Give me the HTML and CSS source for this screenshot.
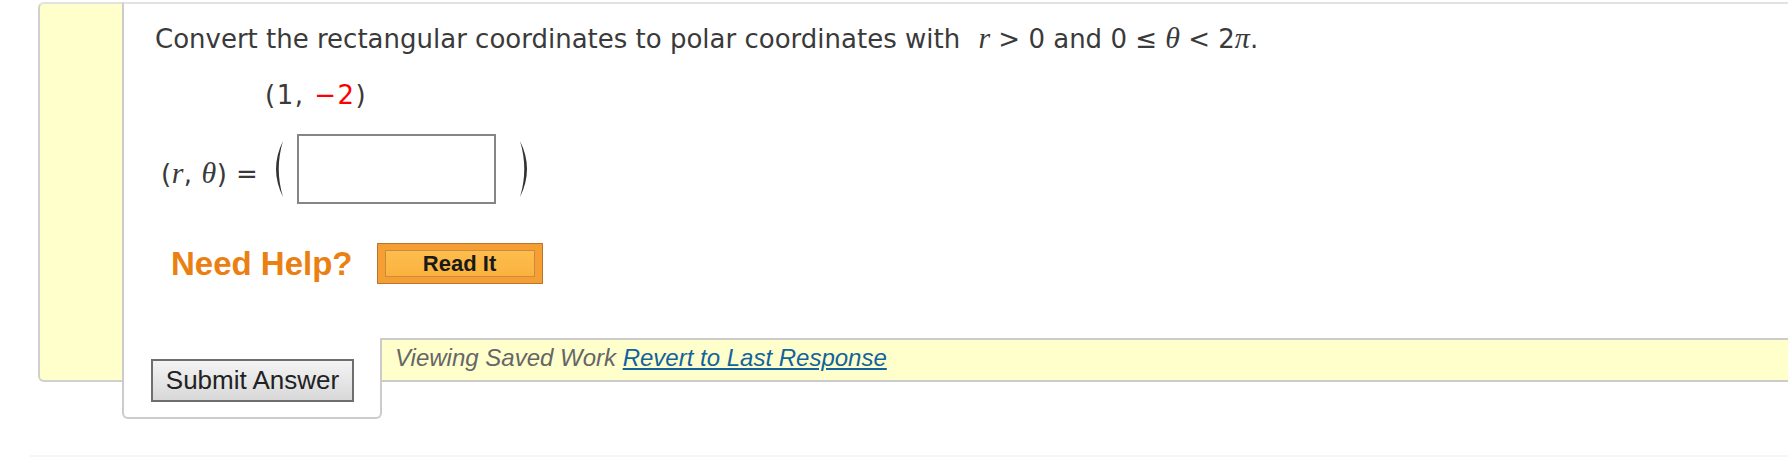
FILE: index.html
```html
<!DOCTYPE html>
<html lang="en">
<head>
<meta charset="utf-8">
<title>Question</title>
<link rel="stylesheet" href="styles.css">
</head>
<body>
<div class="page">
  <div class="question">
    <div class="gutter"></div>
    <div class="qbody">
      <p class="prompt">Convert the rectangular coordinates to polar coordinates with <span class="math first"><i class="v">r</i> &gt; 0</span> and <span class="math">0 ≤ <i class="v">θ</i> &lt; 2<i class="v">π</i></span>.</p>
      <p class="point">(1, <span class="neg">−2</span>)</p>
      <div class="answer">
        <span class="label">(<i class="v">r</i>, <i class="v">θ</i>) =</span>
        <svg class="paren" width="15" height="58" viewBox="0 0 15 58" aria-hidden="true"><path d="M14 1 Q0 29 14 57 Q5.5 29 14 1 Z" fill="#333"/></svg>
        <input class="field" type="text" aria-label="answer">
        <svg class="paren paren-right" width="15" height="58" viewBox="0 0 15 58" aria-hidden="true"><path d="M1 1 Q15 29 1 57 Q9.5 29 1 1 Z" fill="#333"/></svg>
      </div>
      <div class="help">
        <span class="need">Need Help?</span>
        <button class="readit" type="button"><span class="readit-inner">Read It</span></button>
      </div>
    </div>
    <div class="tab"><button class="submit" type="button">Submit Answer</button></div>
    <div class="saved"><em>Viewing Saved Work</em> <a href="#">Revert to Last Response</a></div>
  </div>
  <div class="footer-rule"></div>
</div>
</body>
</html>
```
FILE: styles.css
```css
html, body {
  margin: 0;
  background: #fff;
}
body {
  font-family: "DejaVu Sans", Verdana, sans-serif;
  color: #3a3a3a;
  overflow: hidden;
}
.page {
  padding: 2px 0 0 38px;
}
.question {
  display: grid;
  grid-template-columns: 84px 260px 1fr;
  grid-template-rows: auto 44px 37px;
}
.gutter {
  grid-column: 1;
  grid-row: 1 / 3;
  background: #ffffcc;
  border: 2px solid #d0d0d0;
  border-top-color: #e2e2e2;
  border-right: 0;
  border-radius: 6px 0 0 6px;
}
.qbody {
  grid-column: 2 / 4;
  grid-row: 1;
  background: #fff;
  border-top: 2px solid #e2e2e2;
  border-left: 2px solid #cccccc;
  padding: 19px 0 54px 31px;
}
.prompt {
  margin: 0;
  font-size: 26px;
  line-height: 30px;
}
.math.first {
  margin-left: 10px;
}
.v {
  font-family: "Liberation Serif", "DejaVu Serif", serif;
  font-style: italic;
  font-size: 30px;
  line-height: 1;
}
.point {
  margin: 26px 0 0;
  padding-left: 110px;
  font-size: 26px;
  line-height: 30px;
  letter-spacing: 1.5px;
}
.neg {
  color: #ff0000;
}
.answer {
  margin-top: 24px;
  display: flex;
  align-items: center;
}
.label {
  padding: 8px 0 0 6px;
  font-size: 26px;
  line-height: 30px;
  letter-spacing: 0.5px;
}
.paren {
  display: block;
  margin-left: 11px;
}
.paren-right {
  margin-left: 23px;
}
.field {
  margin: 0 0 0 13px;
  box-sizing: border-box;
  width: 199px;
  height: 70px;
  border: 2px solid #858585;
  background: #fff;
  padding: 0 6px;
  font: 24px "DejaVu Sans", sans-serif;
}
.help {
  margin-top: 39px;
  display: flex;
  align-items: center;
  padding-left: 16px;
}
.need {
  font-family: "Liberation Sans", Arial, sans-serif;
  font-weight: 700;
  font-size: 33px;
  line-height: 33px;
  color: #eb8012;
}
.readit {
  margin: 0 0 0 24px;
  box-sizing: border-box;
  width: 166px;
  height: 41px;
  padding: 6px 7px;
  border: 1px solid #b97630;
  background: #f59e33;
  cursor: pointer;
}
.readit-inner {
  display: block;
  height: 27px;
  box-sizing: border-box;
  border: 1px solid #c98b3e;
  background: linear-gradient(#fdbd4c, #fbb23f);
  font-family: "Liberation Sans", Arial, sans-serif;
  font-weight: 700;
  font-size: 22px;
  line-height: 25px;
  color: #1a1a1a;
  text-align: center;
}
.tab {
  grid-column: 2;
  grid-row: 2 / 4;
  background: #fff;
  border: 2px solid #cccccc;
  border-top: 0;
  border-radius: 0 0 6px 6px;
  padding: 21px 0 0 27px;
}
.submit {
  display: block;
  box-sizing: border-box;
  width: 203px;
  height: 43px;
  margin: 0;
  padding: 0;
  border: 2px solid #6e6e6e;
  background: linear-gradient(#f4f4f4, #d8d8d8);
  font-family: "Liberation Sans", Arial, sans-serif;
  font-size: 26px;
  color: #222;
}
.saved {
  grid-column: 3;
  grid-row: 2;
  background: #ffffcc;
  border-top: 2px solid #cccccc;
  border-bottom: 2px solid #cccccc;
  padding: 4px 13px 8px;
  font-family: "Liberation Sans", Arial, sans-serif;
  font-size: 24px;
  line-height: 28px;
  font-style: italic;
  color: #666;
}
.saved em {
  font-style: italic;
}
.saved a {
  color: #12639c;
  text-decoration: underline;
}
.footer-rule {
  margin: 36px 0 0 -8px;
  border-top: 2px solid #f6f6f6;
}
```
